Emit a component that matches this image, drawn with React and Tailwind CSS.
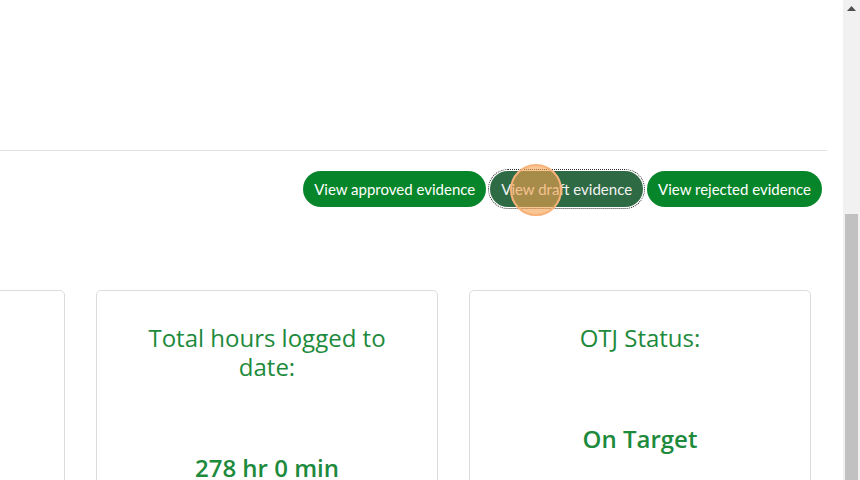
import React from 'react';

const cards = [
  { title: 'Planned hours:', value: '312 hr 0 min' },
  { title: 'Total hours logged to date:', value: '278 hr 0 min' },
  { title: 'OTJ Status:', value: 'On Target' },
];

export default function App() {
  return (
    <div className="flex h-[480px] w-[860px] overflow-hidden bg-white font-['Open_Sans',sans-serif]">
      <div className="flex-1 min-w-0">
        <div className="h-[151px] mr-4 border-b border-[#dee2e6]" />

        <div className="flex justify-end gap-1 pr-[21px] pt-[20px] font-['Lato',sans-serif]">
          <button className="h-9 px-[11px] rounded-full bg-[#07852a] text-white text-[15px]">View approved evidence</button>
          <div className="relative">
            <button className="h-9 px-[11px] rounded-full bg-[#2e6b44] text-[#f2f2f2] text-[15px] outline outline-1 outline-dotted outline-[#2b2b2b] outline-offset-[1px]">
              View draft evidence
            </button>
            <span className="absolute left-[20px] top-[-7px] w-[52px] h-[52px] rounded-full bg-[#f6a04d]/60 border-2 border-[#f7b27a]" />
          </div>
          <button className="h-9 px-[11px] rounded-full bg-[#07852a] text-white text-[15px]">View rejected evidence</button>
        </div>

        <div className="flex justify-end gap-[31px] pr-[32px] mt-[83px] overflow-hidden">
          {cards.map(c => (
            <div key={c.title} className="shrink-0 w-[342px] h-[220px] border border-[#dcdcdc] rounded-[5px] px-6 pt-[32px] text-center text-[#1d8a3c]">
              <h3 className="text-[24px] leading-[29px]">{c.title}</h3>
              <p className="mt-[72px] text-[24px] font-semibold leading-[29px]">{c.value}</p>
            </div>
          ))}
        </div>
      </div>

      <div className="w-[17px] shrink-0 bg-[#f1f1f1] flex flex-col items-center">
        <svg width="9" height="5" viewBox="0 0 9 5" className="mt-[6px]">
          <polygon points="0,5 9,5 4.5,0" fill="#505050" />
        </svg>
        <div className="mt-[203px] w-[13px] flex-1 bg-[#c1c1c1]" />
      </div>
    </div>
  );
}
